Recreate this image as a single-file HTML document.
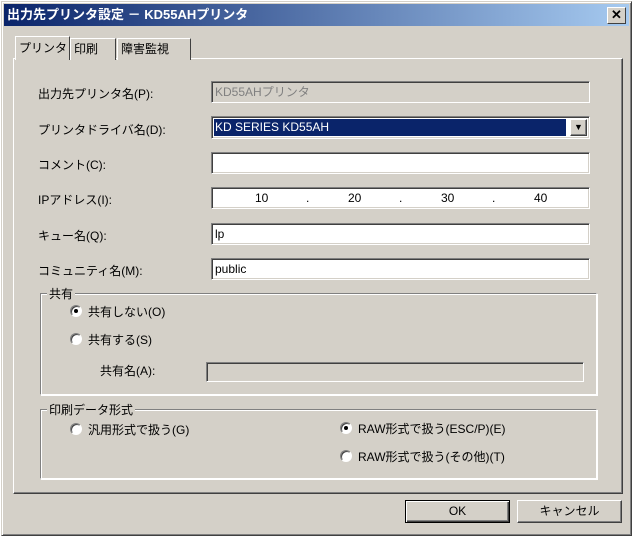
<!DOCTYPE html><html><head><meta charset="utf-8"><style>
*{box-sizing:border-box;margin:0;padding:0}
body{width:635px;height:539px;background:#fff;position:relative;overflow:hidden;font-family:"Liberation Sans","Noto Sans CJK JP",sans-serif;font-size:12px;color:#000;white-space:nowrap}
.a{position:absolute}
.win{left:1px;top:1px;width:631px;height:535px;background:#d4d0c8;border:1px solid;border-color:#d4d0c8 #404040 #404040 #d4d0c8;box-shadow:inset 1px 1px #fff,inset -1px -1px #808080}
.title{left:4px;top:4px;width:625px;height:22px;background:linear-gradient(90deg,#0a246a,#a6caf0);color:#fff;font-weight:bold;font-size:13px;line-height:22px;padding-left:3px}
.close{left:607px;top:7px;width:19px;height:17px;background:#d4d0c8;border:1px solid;border-color:#fff #404040 #404040 #fff;font-weight:bold;font-size:13px;line-height:14px;text-align:center}
.panel{left:13px;top:58px;width:610px;height:436px;border:1px solid;border-color:#fff #404040 #404040 #fff;box-shadow:inset -1px -1px #808080}
.tab{top:38px;height:22px;border:1px solid;border-bottom:none;border-color:#fff #404040 #404040 #fff;background:#d4d0c8;line-height:20px;padding:0 3px;font-size:12px}
.in{background:#fff;border:1px solid;border-color:#808080 #fff #fff #808080;box-shadow:inset 1px 1px #404040,inset -1px -1px #d4d0c8;height:22px;line-height:20px;padding-left:3px;font-size:12px}
.lab{left:38px;font-size:12px}
.grp{border:1px solid;border-color:#808080 #fff #fff #808080;box-shadow:1px 1px #fff,inset 1px 1px #fff}
.gl{background:#d4d0c8;padding:0 2px;font-size:12px;top:-9px;left:6px}
.r{width:12px;height:12px;border-radius:50%;background:#fff;border:1px solid;border-color:#808080 #fff #fff #808080;box-shadow:inset 1px 1px #404040}
.dot:after{content:"";position:absolute;left:3px;top:3px;width:4px;height:4px;border-radius:50%;background:#000}
.btn{height:23px;background:#d4d0c8;border:1px solid;border-color:#fff #404040 #404040 #fff;box-shadow:inset -1px -1px #808080;text-align:center;line-height:21px}
</style></head><body>
<div class="a win"></div>
<div class="a title">出力先プリンタ設定 － KD55AHプリンタ</div>
<div class="a close">✕</div>
<div class="a panel"></div>
<div class="a tab" style="left:15px;top:36px;height:24px;width:55px;z-index:2;line-height:22px">プリンタ</div>
<div class="a tab" style="left:70px;width:46px">印刷</div>
<div class="a tab" style="left:117px;width:74px">障害監視</div>

<div class="a lab" style="top:85px">出力先プリンタ名(P):</div>
<div class="a in" style="left:211px;top:81px;width:379px;height:22px;background:#d4d0c8;color:#808080">KD55AHプリンタ</div>
<div class="a lab" style="top:121px">プリンタドライバ名(D):</div>
<div class="a in" style="left:211px;top:116px;width:379px;height:23px;padding:2px"><div style="background:#0a246a;color:#fff;height:17px;width:352px;line-height:17px;padding-left:1px">KD SERIES KD55AH</div><div class="a btn" style="right:2px;top:2px;width:17px;height:17px;line-height:15px;font-size:9px">▼</div></div>
<div class="a lab" style="top:156px">コメント(C):</div>
<div class="a in" style="left:211px;top:152px;width:379px"></div>
<div class="a lab" style="top:191px">IPアドレス(I):</div>
<div class="a in" style="left:211px;top:187px;width:379px"><span class="a" style="left:43px">10</span><span class="a" style="left:94px">.</span><span class="a" style="left:136px">20</span><span class="a" style="left:187px">.</span><span class="a" style="left:229px">30</span><span class="a" style="left:280px">.</span><span class="a" style="left:322px">40</span></div>
<div class="a lab" style="top:227px">キュー名(Q):</div>
<div class="a in" style="left:211px;top:223px;width:379px">lp</div>
<div class="a lab" style="top:262px">コミュニティ名(M):</div>
<div class="a in" style="left:211px;top:258px;width:379px">public</div>

<div class="a grp" style="left:40px;top:293px;width:557px;height:102px"><span class="a gl">共有</span></div>
<div class="a r dot" style="left:70px;top:305px"></div><div class="a" style="left:88px;top:303px">共有しない(O)</div>
<div class="a r" style="left:70px;top:333px"></div><div class="a" style="left:88px;top:331px">共有する(S)</div>
<div class="a" style="left:100px;top:362px">共有名(A):</div>
<div class="a in" style="left:206px;top:362px;width:378px;height:20px;background:#d4d0c8"></div>

<div class="a grp" style="left:40px;top:409px;width:557px;height:70px"><span class="a gl">印刷データ形式</span></div>
<div class="a r" style="left:70px;top:423px"></div><div class="a" style="left:88px;top:421px">汎用形式で扱う(G)</div>
<div class="a r dot" style="left:340px;top:422px"></div><div class="a" style="left:358px;top:420px">RAW形式で扱う(ESC/P)(E)</div>
<div class="a r" style="left:340px;top:450px"></div><div class="a" style="left:358px;top:448px">RAW形式で扱う(その他)(T)</div>

<div class="a btn" style="left:405px;top:500px;width:105px;border:1px solid #000;box-shadow:inset 1px 1px #fff,inset -1px -1px #404040,inset -2px -2px #808080">OK</div>
<div class="a btn" style="left:517px;top:500px;width:105px">キャンセル</div>
</body></html>
